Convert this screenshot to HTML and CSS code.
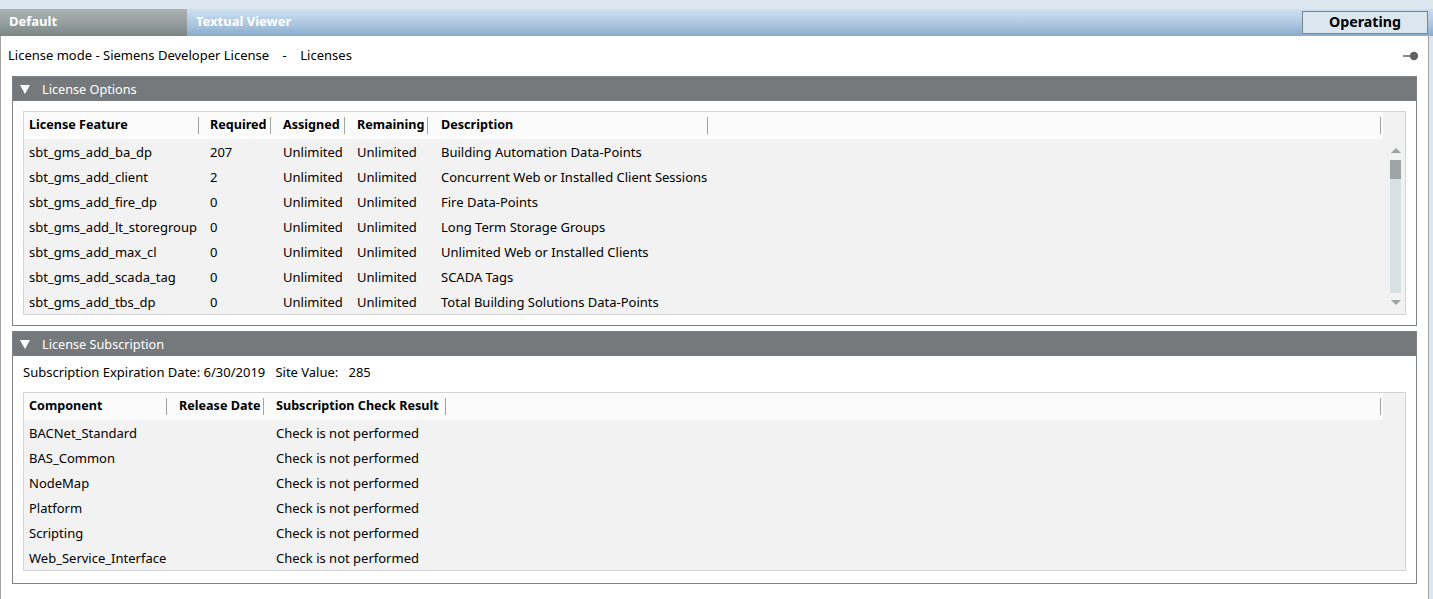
FILE: index.html
```html
<!DOCTYPE html>
<html lang="en">
<head>
    <meta charset="UTF-8">
    <title>Licenses</title>
    <link rel="stylesheet" href="styles.css">
</head>
<body>
    <div class="tabbar">
        <div class="tab tab-active">Default</div>
        <div class="tab">Textual Viewer</div>
        <div class="tab-fill"></div>
        <div class="mode-button">Operating</div>
    </div>

    <div class="panel">
        <div class="info">
            <span>License mode - Siemens Developer License&nbsp;&nbsp;&nbsp; -&nbsp;&nbsp;&nbsp; Licenses</span>
            <svg class="pin" viewBox="0 0 16 10">
                <line x1="0" y1="5" x2="8" y2="5" stroke="#636363" stroke-width="1.5"></line>
                <circle cx="11" cy="5" r="4.2" fill="#636363"></circle>
            </svg>
        </div>

        <!-- License Options -->
        <div class="group">
            <div class="group-header">
                <svg class="caret" viewBox="0 0 10 9"><polygon points="0,0 10,0 5,9" fill="#fff"></polygon></svg>
                License Options
            </div>
            <div class="group-body">
                <div class="grid">
                    <div class="table">
                        <div class="thead">
                            <div class="th c-feature">License Feature</div>
                            <div class="th c-req">Required</div>
                            <div class="th c-asg">Assigned</div>
                            <div class="th c-rem">Remaining</div>
                            <div class="th c-desc">Description</div>
                            <div class="th c-fill"></div>
                        </div>
                        <div class="tr"><div class="td c-feature">sbt_gms_add_ba_dp</div><div class="td c-req">207</div><div class="td c-asg">Unlimited</div><div class="td c-rem">Unlimited</div><div class="td c-desc">Building Automation Data-Points</div></div>
                        <div class="tr"><div class="td c-feature">sbt_gms_add_client</div><div class="td c-req">2</div><div class="td c-asg">Unlimited</div><div class="td c-rem">Unlimited</div><div class="td c-desc">Concurrent Web or Installed Client Sessions</div></div>
                        <div class="tr"><div class="td c-feature">sbt_gms_add_fire_dp</div><div class="td c-req">0</div><div class="td c-asg">Unlimited</div><div class="td c-rem">Unlimited</div><div class="td c-desc">Fire Data-Points</div></div>
                        <div class="tr"><div class="td c-feature">sbt_gms_add_lt_storegroup</div><div class="td c-req">0</div><div class="td c-asg">Unlimited</div><div class="td c-rem">Unlimited</div><div class="td c-desc">Long Term Storage Groups</div></div>
                        <div class="tr"><div class="td c-feature">sbt_gms_add_max_cl</div><div class="td c-req">0</div><div class="td c-asg">Unlimited</div><div class="td c-rem">Unlimited</div><div class="td c-desc">Unlimited Web or Installed Clients</div></div>
                        <div class="tr"><div class="td c-feature">sbt_gms_add_scada_tag</div><div class="td c-req">0</div><div class="td c-asg">Unlimited</div><div class="td c-rem">Unlimited</div><div class="td c-desc">SCADA Tags</div></div>
                        <div class="tr"><div class="td c-feature">sbt_gms_add_tbs_dp</div><div class="td c-req">0</div><div class="td c-asg">Unlimited</div><div class="td c-rem">Unlimited</div><div class="td c-desc">Total Building Solutions Data-Points</div></div>
                    </div>
                    <div class="scroll">
                        <div class="scroll-bar">
                            <div class="arrow arrow-up"></div>
                            <div class="track"><div class="thumb"></div></div>
                            <div class="arrow arrow-down"></div>
                        </div>
                    </div>
                </div>
            </div>
        </div>

        <!-- License Subscription -->
        <div class="group">
            <div class="group-header">
                <svg class="caret" viewBox="0 0 10 9"><polygon points="0,0 10,0 5,9" fill="#fff"></polygon></svg>
                License Subscription
            </div>
            <div class="group-body group-body-sub">
                <div class="sub-info">Subscription Expiration Date: 6/30/2019&nbsp;&nbsp; Site Value:&nbsp;&nbsp; 285</div>
                <div class="grid">
                    <div class="table">
                        <div class="thead">
                            <div class="th c-comp">Component</div>
                            <div class="th c-rel">Release Date</div>
                            <div class="th c-res">Subscription Check Result</div>
                            <div class="th c-fill"></div>
                        </div>
                        <div class="tr"><div class="td c-comp">BACNet_Standard</div><div class="td c-rel"></div><div class="td c-res">Check is not performed</div></div>
                        <div class="tr"><div class="td c-comp">BAS_Common</div><div class="td c-rel"></div><div class="td c-res">Check is not performed</div></div>
                        <div class="tr"><div class="td c-comp">NodeMap</div><div class="td c-rel"></div><div class="td c-res">Check is not performed</div></div>
                        <div class="tr"><div class="td c-comp">Platform</div><div class="td c-rel"></div><div class="td c-res">Check is not performed</div></div>
                        <div class="tr"><div class="td c-comp">Scripting</div><div class="td c-rel"></div><div class="td c-res">Check is not performed</div></div>
                        <div class="tr"><div class="td c-comp">Web_Service_Interface</div><div class="td c-rel"></div><div class="td c-res">Check is not performed</div></div>
                    </div>
                    <div class="scroll"></div>
                </div>
            </div>
        </div>
    </div>
</body>
</html>
```

FILE: styles.css
```css
html, body {
    height: 100%;
}

body {
    margin: 0;
    padding-top: 9px;
    box-sizing: border-box;
    background-color: #dce6ee;
    font-family: "Noto Sans", "Open Sans", sans-serif;
    font-size: 13px;
    color: #000;
    display: flex;
    flex-direction: column;
    overflow: hidden;
}

/* Tab bar */
.tabbar {
    height: 27px;
    display: flex;
    align-items: center;
    background: linear-gradient(#cde0f3, #a9c4de 60%, #88aacb);
}

.tab {
    height: 27px;
    line-height: 25px;
    padding-left: 9px;
    font-weight: bold;
    color: #fff;
    box-sizing: border-box;
}

.tab-active {
    width: 187px;
    background: linear-gradient(#abb3b3, #949d9c 55%, #7b8685);
}

.tab-fill {
    flex: 1;
}

.mode-button {
    width: 126px;
    height: 23px;
    box-sizing: border-box;
    margin-right: 5px;
    background-color: #dbe6ef;
    border: 1px solid #7a8590;
    text-align: center;
    line-height: 20px;
    font-weight: bold;
    font-size: 14.2px;
}

/* Main panel */
.panel {
    flex: 1;
    width: 1429px;
    box-sizing: border-box;
    background: #fff;
    border-left: 1px solid #a3a3a3;
    border-right: 1px solid #a3a3a3;
}

.info {
    height: 40px;
    box-sizing: border-box;
    padding: 9px 9px 0 7px;
    display: flex;
    justify-content: space-between;
    align-items: flex-start;
    line-height: 20px;
}

.pin {
    width: 16px;
    height: 10px;
    margin-top: 6px;
}

.group {
    margin: 0 11px 5px 11px;
    border: 1px solid #7f8386;
}

.group-header {
    height: 24px;
    display: flex;
    align-items: center;
    background-color: #76797c;
    color: #fff;
    font-size: 12.7px;
    padding-left: 7px;
}

.caret {
    width: 10px;
    height: 9px;
    margin-right: 12px;
}

.group-body {
    padding: 10px;
}

.group-body-sub {
    padding-bottom: 12px;
}

.sub-info {
    line-height: 20px;
    margin: -4px 0 10px 0;
}

/* Data grids */
.grid {
    display: flex;
    background-color: #f2f2f2;
    border: 1px solid #d3d3d3;
}

.table {
    flex: 1;
}

.thead {
    height: 27px;
    display: flex;
    align-items: center;
    background-color: #fbfbfb;
    font-weight: bold;
    font-size: 12.6px;
}

.th {
    height: 17px;
    line-height: 16px;
    box-sizing: border-box;
    border-right: 1px solid #a3a3a3;
    white-space: nowrap;
}

.th.c-fill {
    flex: 1;
    margin-right: 2px;
}

.tr {
    height: 25px;
    display: flex;
    align-items: center;
    line-height: 18px;
    padding-top: 1px;
    box-sizing: border-box;
}

.td {
    box-sizing: border-box;
    white-space: nowrap;
}

.c-feature { width: 175px; padding-left: 5px; }
.c-req { width: 72px; padding-left: 11px; }
.c-asg { width: 74px; padding-left: 12px; }
.c-rem { width: 83px; padding-left: 12px; }
.c-desc { width: 280px; padding-left: 13px; }

.c-comp { width: 143px; padding-left: 5px; }
.c-rel { width: 97px; padding-left: 12px; }
.c-res { width: 182px; padding-left: 12px; }

.scroll {
    width: 22px;
}

.scroll-bar {
    width: 11px;
    margin: 36px 0 0 7px;
    display: flex;
    flex-direction: column;
    align-items: center;
}

.arrow {
    width: 0;
    height: 0;
    border-left: 5px solid transparent;
    border-right: 5px solid transparent;
}

.arrow-up {
    border-bottom: 5px solid #9ea3a6;
    margin-bottom: 7px;
}

.arrow-down {
    border-top: 5px solid #9ea3a6;
    margin-top: 7px;
}

.track {
    width: 11px;
    height: 133px;
    background-color: #d8e0e4;
}

.thumb {
    height: 19px;
    background-color: #9ea3a6;
}
```
